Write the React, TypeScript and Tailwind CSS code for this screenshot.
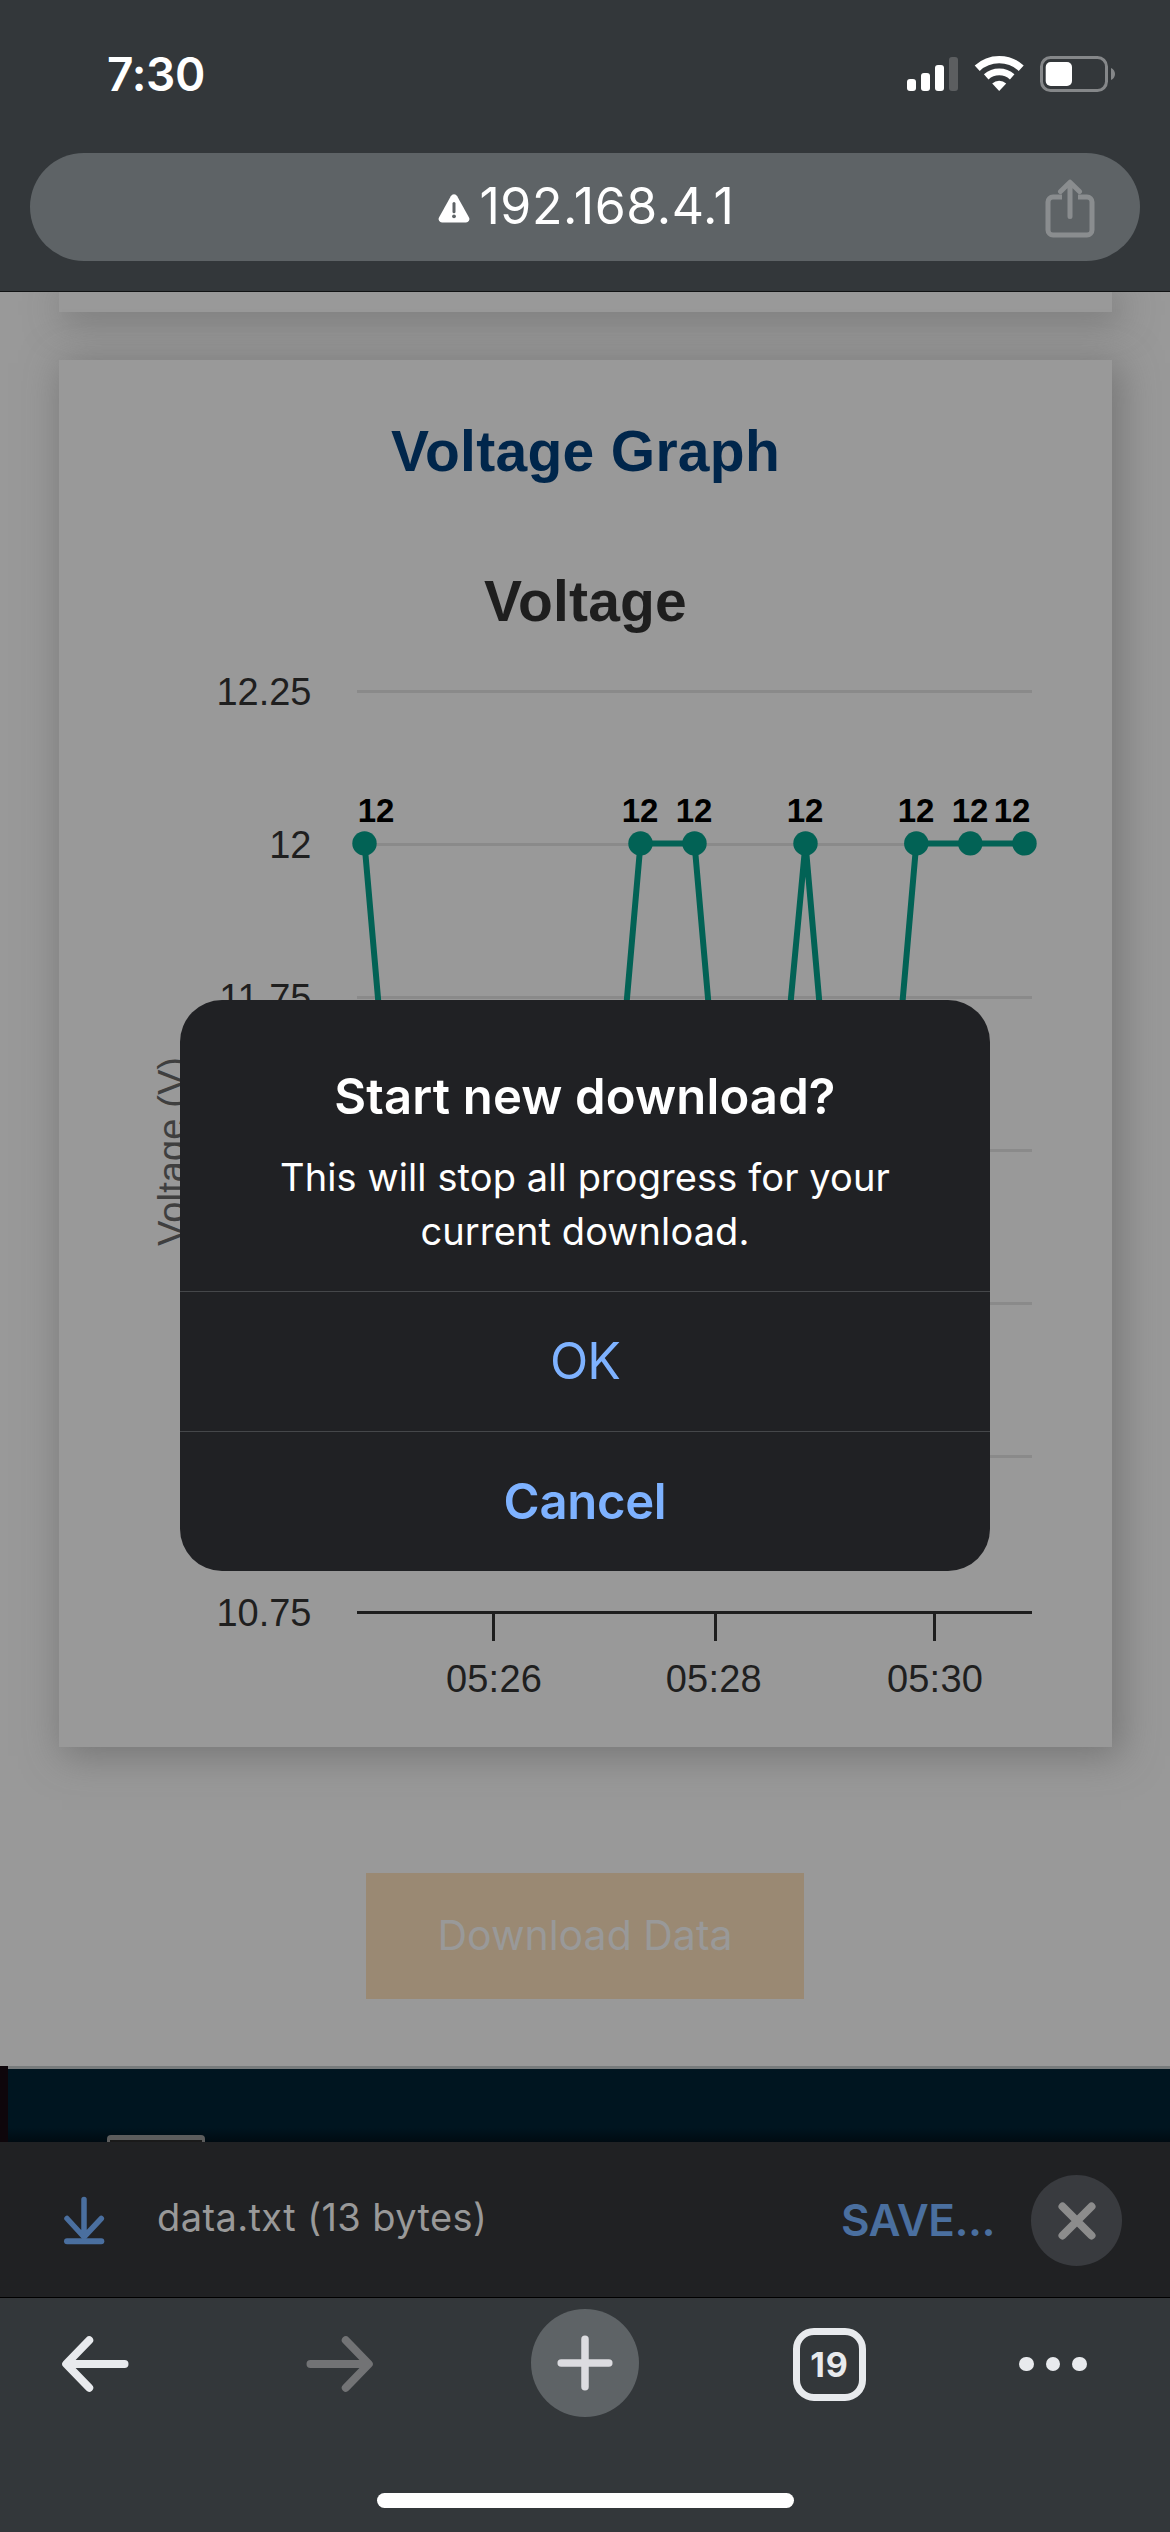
import React from "react";

const POINTS_X = [364.5, 640.5, 694.5, 805.5, 916.3, 970.3, 1024.5];
const LABELS_X = [376, 640, 694, 805, 916, 970, 1012];
const GRID_Y = [691.5, 844.5, 997.5, 1150.5, 1303.5, 1456.5];
const Y_LABELS: [string, number][] = [
  ["12.25", 704.5],
  ["12", 858],
  ["11.75", 1011],
  ["10.75", 1626],
];
const X_TICKS: [string, number, number][] = [
  ["05:26", 493.5, 494],
  ["05:28", 715.5, 713.8],
  ["05:30", 934.5, 935],
];

function StatusBar() {
  return (
    <div className="flex h-[148px] items-center justify-between pl-[107px] pr-[55px]">
      <span className="text-[46px] font-semibold tracking-[-0.3px] text-white">7:30</span>
      <svg width="208" height="38" viewBox="907 55 208 38" fill="none">
        <rect x="907" y="79" width="9" height="12" rx="3" fill="#fff" />
        <rect x="921" y="73" width="9" height="18" rx="3" fill="#fff" />
        <rect x="935" y="65" width="9" height="26" rx="3" fill="#fff" />
        <rect x="949" y="57" width="9" height="34" rx="3" fill="#5c5e60" />
        <path d="M977.2 68.2a32.5 32.5 0 0 1 44 0" stroke="#fff" strokeWidth="7.4" />
        <path d="M986.2 76.9a19.5 19.5 0 0 1 26 0" stroke="#fff" strokeWidth="6.8" />
        <path d="M999.2 91l-7-7.6a10.5 10.5 0 0 1 14 0z" fill="#fff" />
        <rect x="1041.5" y="57.5" width="65" height="33" rx="9" stroke="#858789" strokeWidth="3" />
        <rect x="1045.7" y="62" width="26.3" height="24" rx="5" fill="#fff" />
        <path d="M1111 68c2.700 1 4 3.500 4 6s-1.300 5-4 6z" fill="#858789" />
      </svg>
    </div>
  );
}

function AddressBar() {
  return (
    <div className="mx-[30px] mt-[5px] grid h-[108px] grid-cols-[1fr_auto_1fr] items-center rounded-full bg-[#5e6366]">
      <span />
      <div className="flex items-center gap-[9px] pb-0.5 pl-[3px]">
        <svg className="mt-1" width="32" height="29" viewBox="0 0 32 29">
          <path
            d="M12.800 2.200a3.700 3.700 0 0 1 6.400 0l11.800 21.200a3.400 3.400 0 0 1-3 5H4a3.400 3.400 0 0 1-3-5z"
            fill="#fff"
          />
          <path d="M16 9.500v8.200" stroke="#5e6366" strokeWidth="3" strokeLinecap="round" />
          <circle cx="16" cy="22.300" r="1.900" fill="#5e6366" />
        </svg>
        <span className="text-[50px] leading-[60px] tracking-[0.6px] text-white">192.168.4.1</span>
      </div>
      <svg className="mr-[45px] mt-1 justify-self-end" width="50" height="60" viewBox="0 0 50 60" fill="none" stroke="#8a8d8f" strokeWidth="5" strokeLinecap="round" strokeLinejoin="round">
        <path d="M17.500 20.500H8.500a5 5 0 0 0-5 5v28a5 5 0 0 0 5 5h34a5 5 0 0 0 5-5v-28a5 5 0 0 0-5-5h-9" strokeLinecap="butt" transform="translate(-.5 -2.500)" />
        <path d="M25 37.500V4M15.500 12.500L25 3.200l9.500 9.300" />
      </svg>
    </div>
  );
}

function VoltageChart() {
  return (
    <svg className="block" width="1053" height="1106" viewBox="59 641 1053 1106" fontFamily="'Liberation Sans', Arial, sans-serif">
      {GRID_Y.map((y) => (
        <path key={y} d={`M357 ${y}H1032`} stroke="#8a8a8a" strokeWidth="3" />
      ))}
      <path d="M357 1612.500H1032" stroke="#1e1e1e" strokeWidth="3" />
      {Y_LABELS.map(([t, y]) => (
        <text key={t} x="311.500" y={y} fontSize="38" textAnchor="end" fill="#1f1f1f">
          {t}
        </text>
      ))}
      {X_TICKS.map(([t, x, c]) => (
        <g key={t}>
          <path d={`M${x} 1612V1641`} stroke="#1e1e1e" strokeWidth="3" />
          <text x={c} y="1692" fontSize="38" letterSpacing="0.2" textAnchor="middle" fill="#1f1f1f">
            {t}
          </text>
        </g>
      ))}
      <text transform="translate(185 1246) rotate(-90)" fontSize="38" letterSpacing="0.1" fill="#3f3f3f">
        Voltage (V)
      </text>
      <path
        d="M364.500 843.500L418 1456H587L640.500 843.500H694.500L748 1456L805.500 843.500L859 1456H863L916.300 843.500H1024.500"
        fill="none"
        stroke="#026255"
        strokeWidth="6"
        strokeLinejoin="round"
      />
      {POINTS_X.map((x) => (
        <circle key={x} cx={x} cy="843.4" r="12.2" fill="#026255" />
      ))}
      {LABELS_X.map((x) => (
        <text key={x} x={x} y="822" fontSize="33" fontWeight="700" textAnchor="middle" fill="#000">
          12
        </text>
      ))}
    </svg>
  );
}

function Page() {
  return (
    <main className="relative h-[1850px] overflow-hidden bg-[#999]">
      <div className="ml-[59px] h-5 w-[1053px] bg-[#999] shadow-[6px_6px_36px_3px_rgba(84,84,84,0.5)]" />
      <section className="ml-[59px] mt-12 h-[1387px] w-[1053px] bg-[#999] pt-[51px] font-['Liberation_Sans',Arial,sans-serif] shadow-[6px_6px_36px_3px_rgba(84,84,84,0.5)]">
        <h2 className="h-20 text-center text-[57px] font-bold leading-[80px] tracking-[0.3px] text-[#00264b]">Voltage Graph</h2>
        <h3 className="mt-[70px] h-20 text-center text-[57px] font-bold leading-[80px] tracking-[0.2px] text-[#1e1e1e]">Voltage</h3>
        <VoltageChart />
      </section>
      <button className="mx-auto mt-[126px] flex h-[126px] w-[438px] items-center justify-center bg-[#9a8973] text-[41px] text-[#999]">
        Download Data
      </button>
      <footer className="relative mt-[67px] flex h-[76px] bg-[#0e060b] pl-2">
        <div className="flex flex-1 items-end border-t-[3px] border-[#777b7c] bg-gradient-to-b from-[#001520] from-80% to-[#000b12] pl-[99px]">
          <div className="h-[7px] w-[98px] rounded-t-sm border-x-[3px] border-t-[5px] border-[#5c5c5c] bg-[#1a1a1a]" />
        </div>
      </footer>

      <div role="dialog" className="absolute left-[180px] top-[708px] w-[810px] overflow-hidden rounded-[42px] bg-[#202124] text-center">
        <div className="h-[291px] pt-[70px] text-white">
          <h1 className="text-[49px] font-semibold leading-[54px] tracking-[0.15px]">Start new download?</h1>
          <p className="mx-auto mt-[26px] w-[680px] text-[38px] leading-[54px] tracking-[0.1px]">
            This will stop all progress for your
            <br />
            current download.
          </p>
        </div>
        <button className="flex h-[140px] w-full items-center justify-center border-t border-[#45474a] text-[50px] tracking-[-1px] text-[#7eb2ff]">OK</button>
        <button className="flex h-[140px] w-full items-center justify-center border-t border-[#45474a] text-[49px] font-semibold tracking-[-0.3px] text-[#7eb2ff]">
          Cancel
        </button>
      </div>
    </main>
  );
}

function DownloadBar() {
  return (
    <div className="flex h-[156px] items-center border-b border-black bg-[#202123] pl-[63px] pr-12">
      <svg className="mt-0.5" width="42" height="50" viewBox="63 2196 42 50" fill="none" stroke="#4a6f9f" strokeWidth="5.500" strokeLinecap="round">
        <path d="M84 2199.500V2236M67 2218.500L84 2237L101.300 2218.500" strokeLinejoin="round" />
        <path d="M67 2241.200H101.300" strokeWidth="6" />
      </svg>
      <span className="mb-[5px] ml-[52px] text-[38px] tracking-[0.4px] text-[#999]">data.txt (13 bytes)</span>
      <span className="ml-auto text-[44px] font-semibold tracking-[-0.5px] text-[#4a6f9f]">SAVE...</span>
      <div className="ml-[36px] mt-0.5 flex size-[91px] items-center justify-center rounded-full bg-[#393b3f]">
        <svg width="40" height="40" viewBox="0 0 40 40" stroke="#8c8c8c" strokeWidth="8" strokeLinecap="round">
          <path d="M5.500 5.500L34.500 34.500M34.500 5.500L5.500 34.500" />
        </svg>
      </div>
    </div>
  );
}

function Toolbar() {
  return (
    <nav className="flex h-[234px] flex-col items-center justify-between bg-[#33373a]">
      <div className="flex h-[132px] w-full items-center pl-[61px]">
        <svg width="68" height="58" viewBox="0 0 68 58" fill="none" stroke="#e8eaed" strokeWidth="8" strokeLinecap="round" strokeLinejoin="round">
          <path d="M63.500 29H6M28.200 5.200L5.200 29L28.200 52.800" />
        </svg>
        <svg className="ml-[177px]" width="68" height="58" viewBox="0 0 68 58" fill="none" stroke="#727375" strokeWidth="8" strokeLinecap="round" strokeLinejoin="round">
          <path d="M4.500 29H62M39.800 5.200L62.800 29L39.800 52.800" />
        </svg>
        <div className="mb-[2px] ml-[157px] flex size-[108px] items-center justify-center rounded-full bg-[#5e6366]">
          <svg width="56" height="56" viewBox="0 0 56 56" stroke="#dcdce0" strokeWidth="7.500" strokeLinecap="round">
            <path d="M28 4.200V51.800M4.200 28H51.800" />
          </svg>
        </div>
        <div className="ml-[154px] flex size-[73px] items-center justify-center rounded-[21px] border-[7px] border-[#e8eaed] pt-px text-[34px] font-bold tracking-[1px] text-[#e8eaed]">
          19
        </div>
        <div className="ml-[153px] flex gap-3">
          <span className="size-[14.5px] rounded-full bg-[#e8eaed]" />
          <span className="size-[14.5px] rounded-full bg-[#e8eaed]" />
          <span className="size-[14.5px] rounded-full bg-[#e8eaed]" />
        </div>
      </div>
      <div className="mb-6 h-[15px] w-[417px] rounded-full bg-white" />
    </nav>
  );
}

export default function App() {
  return (
    <div className="flex h-[2532px] w-[1170px] flex-col overflow-hidden bg-[#33373a] font-[Inter,sans-serif]">
      <header className="h-[292px] border-b border-[#111314]">
        <StatusBar />
        <AddressBar />
      </header>
      <Page />
      <DownloadBar />
      <Toolbar />
    </div>
  );
}
